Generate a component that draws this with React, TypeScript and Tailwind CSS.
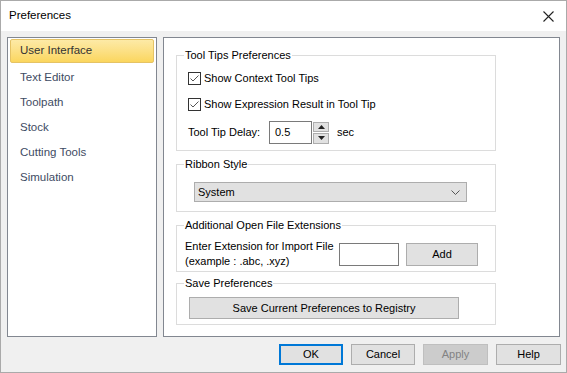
import React from "react";

const NAV = ["User Interface", "Text Editor", "Toolpath", "Stock", "Cutting Tools", "Simulation"];

function Group({ title, className, children }: { title: string; className?: string; children?: React.ReactNode }) {
  return (
    <div className={`relative border border-[#dcdcdc] ${className ?? ""}`}>
      <span className="absolute -top-[9px] left-[7px] bg-white px-[1px] leading-[16px]">{title}</span>
      {children}
    </div>
  );
}

function Check() {
  return (
    <span className="flex h-[13px] w-[13px] shrink-0 items-center justify-center border border-[#333333] bg-white">
      <svg width="11" height="11" viewBox="0 0 11 11">
        <path d="M1.5 5.5 L4 8 L9.5 2.5" fill="none" stroke="#555555" strokeWidth="1" />
      </svg>
    </span>
  );
}

function Btn({ children, className }: { children: React.ReactNode; className?: string }) {
  return (
    <div className={`flex items-center justify-center border border-[#adadad] bg-[#e1e1e1] ${className ?? ""}`}>
      {children}
    </div>
  );
}

export default function App() {
  return (
    <div
      className="flex h-[373px] w-[567px] flex-col border border-[#aaaaaa] bg-[#f0f0f0] text-[11px] text-black"
      style={{ fontFamily: '"Liberation Sans", Arial, sans-serif' }}
    >
      {/* title bar */}
      <div className="flex h-[30px] items-center justify-between bg-white pl-[8px] pr-[12px]">
        <span className="text-[11.5px]">Preferences</span>
        <svg width="11" height="11" viewBox="0 0 11 11">
          <path d="M0.5 0.5 L10.5 10.5 M10.5 0.5 L0.5 10.5" stroke="#222222" strokeWidth="1.1" />
        </svg>
      </div>

      <div className="mt-[6px] flex h-[300px] gap-[6px] pl-[6px]">
        {/* nav list */}
        <div className="flex w-[150px] flex-col border border-[#828790] bg-white p-[2px] pt-[1px]">
          {NAV.map((n, i) =>
            i === 0 ? (
              <div
                key={n}
                className="mb-[2px] flex h-[24px] items-center rounded-[2px] border border-[#e5c365] bg-gradient-to-b from-[#fdeaa6] to-[#fbd65d] pl-[9px] text-[11.5px] text-[#333333]"
              >
                {n}
              </div>
            ) : (
              <div key={n} className="flex h-[25px] items-center pl-[10px] text-[11.5px] text-[#3e4b63]">
                {n}
              </div>
            )
          )}
        </div>

        {/* content panel */}
        <div className="flex w-[397px] flex-col border border-[#828790] bg-white pl-[12px] pt-[17px]">
          <Group title="Tool Tips Preferences" className="h-[96px] w-[320px]">
            <div className="flex flex-col pl-[11px] pt-[16px]">
              <div className="flex h-[13px] items-center gap-[3px]">
                <Check />
                <span>Show Context Tool Tips</span>
              </div>
              <div className="mt-[13px] flex h-[13px] items-center gap-[3px]">
                <Check />
                <span>Show Expression Result in Tool Tip</span>
              </div>
              <div className="mt-[10px] flex items-center">
                <span className="w-[81px]">Tool Tip Delay:</span>
                <div className="flex h-[23px] w-[43px] items-center border border-[#7a7a7a] bg-white pl-[5px]">0.5</div>
                <div className="ml-[1px] flex h-[22px] w-[16px] flex-col gap-[1px]">
                  <div className="flex flex-1 items-center justify-center border border-[#adadad] bg-[#e1e1e1]">
                    <svg width="7" height="4" viewBox="0 0 7 4"><path d="M0 4 L3.5 0 L7 4 Z" fill="#222" /></svg>
                  </div>
                  <div className="flex flex-1 items-center justify-center border border-[#adadad] bg-[#e1e1e1]">
                    <svg width="7" height="4" viewBox="0 0 7 4"><path d="M0 0 L3.5 4 L7 0 Z" fill="#222" /></svg>
                  </div>
                </div>
                <span className="ml-[8px]">sec</span>
              </div>
            </div>
          </Group>

          <Group title="Ribbon Style" className="mt-[13px] h-[48px] w-[320px]">
            <div className="pl-[17px] pt-[17px]">
              <div className="flex h-[20px] w-[273px] items-center justify-between border border-[#adadad] bg-[#e1e1e1] pl-[3px] pr-[6px]">
                <span>System</span>
                <svg width="9" height="5" viewBox="0 0 9 5">
                  <path d="M0.5 0.5 L4.5 4.5 L8.5 0.5" fill="none" stroke="#555555" strokeWidth="1" />
                </svg>
              </div>
            </div>
          </Group>

          <Group title="Additional Open File Extensions" className="mt-[13px] h-[47px] w-[320px]">
            <div className="flex items-center pl-[8px] pt-[13px]">
              <div className="flex w-[154px] flex-col whitespace-nowrap leading-[15px]">
                <span>Enter Extension for Import File</span>
                <span>(example : .abc, .xyz)</span>
              </div>
              <div className="h-[23px] w-[60px] border border-[#7a7a7a] bg-white" />
              <Btn className="ml-[7px] h-[23px] w-[72px]">Add</Btn>
            </div>
          </Group>

          <Group title="Save Preferences" className="mt-[11px] h-[42px] w-[320px]">
            <div className="pl-[12px] pt-[13px]">
              <Btn className="h-[22px] w-[270px]">Save Current Preferences to Registry</Btn>
            </div>
          </Group>
        </div>
      </div>

      {/* footer buttons */}
      <div className="mt-[7px] flex gap-[8px] pl-[278px]">
        <div className="flex h-[21px] w-[64px] items-center justify-center border-2 border-[#0078d7] bg-[#e1e1e1]">OK</div>
        <Btn className="h-[21px] w-[64px]">Cancel</Btn>
        <div className="flex h-[21px] w-[65px] items-center justify-center border border-[#bfbfbf] bg-[#cccccc] text-[#838383]">
          Apply
        </div>
        <Btn className="h-[21px] w-[65px]">Help</Btn>
      </div>
    </div>
  );
}
